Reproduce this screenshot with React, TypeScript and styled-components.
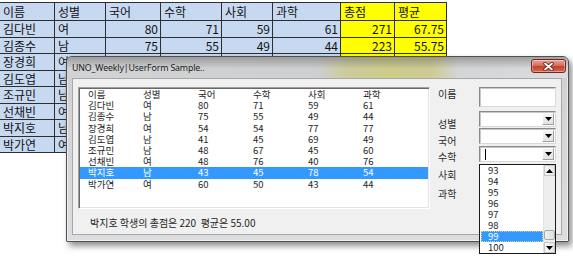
import React from "react";
import styled, { createGlobalStyle } from "styled-components";

const Global = createGlobalStyle`
  html, body { margin: 0; padding: 0; background: #ffffff; }
  body { font-family: "Noto Sans CJK KR", "Noto Sans", sans-serif; }
  * { box-sizing: border-box; }
`;

const Page = styled.div`
  position: relative;
  width: 573px;
  height: 260px;
  overflow: hidden;
  padding-top: 2px;
`;

const Sheet = styled.div`
  display: grid;
  grid-template-columns: 55px 51px 55px 61px 51px 68px 54px 52px;
  grid-template-rows: 18px 17px 16px 17px 16px 17px 16px 17px 16px;
  width: max-content;
  border-top: 1px solid #2e2e2e;
`;

const Cell = styled.div<{ $tone: "blue" | "yellow"; $align: "left" | "right" }>`
  display: flex;
  align-items: center;
  justify-content: ${(p) => (p.$align === "right" ? "flex-end" : "flex-start")};
  padding: 0 ${(p) => (p.$align === "right" ? "2px" : "3px")};
  background: ${(p) => (p.$tone === "yellow" ? "#ffff00" : "#c6d9f1")};
  border-right: 1px solid #2e2e2e;
  border-bottom: 1px solid #2e2e2e;
  font-size: 12px;
  line-height: 14px;
  color: #111;
  white-space: nowrap;
`;

const Window = styled.div`
  position: absolute;
  left: 66px;
  top: 56px;
  width: 503px;
  height: 186px;
  display: flex;
  flex-direction: column;
  border: 1px solid #505050;
  border-radius: 6px 6px 1px 1px;
  background: linear-gradient(to bottom, #cfd0d2 0%, #dcdddf 100%);
  box-shadow: 3px 4px 6px rgba(0, 0, 0, 0.45), inset 0 0 0 1px rgba(255, 255, 255, 0.55);
`;

const TitleBar = styled.div`
  height: 21px;
  flex: none;
  display: flex;
  align-items: flex-start;
  justify-content: space-between;
  padding-left: 5px;
  border-radius: 5px 5px 0 0;
  background:
    linear-gradient(to bottom, rgba(100, 100, 100, 0.5) 0%, rgba(190, 190, 190, 0.1) 55%, rgba(220, 220, 220, 0) 100%),
    linear-gradient(to right, #d3d4d5 0%, #cfd0d1 50%, #cdcc98 56%, #cfcd86 64%, #cdcc92 73%, #d5d6d7 78%, #dcdddf 100%);
`;

const Title = styled.div`
  margin-top: 5px;
  font-family: "Noto Sans", "Noto Sans CJK KR", sans-serif;
  font-size: 8.8px;
  line-height: 12px;
  color: #1b1b1b;
  letter-spacing: -0.15px;
`;

const CloseButton = styled.div`
  margin-top: 2px;
  margin-right: 2px;
  width: 35px;
  height: 14px;
  display: flex;
  align-items: center;
  justify-content: center;
  border: 1px solid #6e2a22;
  border-radius: 3px;
  background: linear-gradient(to bottom, #e8a598 0%, #d6705f 45%, #c2412c 55%, #d76a52 100%);
  box-shadow: inset 0 0 0 1px rgba(255, 255, 255, 0.35);
`;

const Client = styled.div`
  flex: 1;
  margin: 0 6px 6px 5px;
  display: flex;
  flex-direction: column;
  background: #f0f0f0;
  border: 1px solid #a6a8ab;
  padding: 8px 0 0 5px;
`;

const Body = styled.div`
  display: flex;
  gap: 8px;
`;

const ListBox = styled.div`
  width: 352px;
  height: 122px;
  flex: none;
  background: #ffffff;
  border: 1px solid;
  border-color: #a0a0a0 #ffffff #ffffff #a0a0a0;
  box-shadow: inset 1px 1px 0 #696969, inset -1px -1px 0 #e3e3e3;
  padding: 1px 1px 0 1px;
`;

const ListRow = styled.div<{ $selected: boolean }>`
  display: grid;
  grid-template-columns: repeat(6, 55px);
  padding-left: 8px;
  height: 11.2px;
  background: ${(p) => (p.$selected ? "#3399ff" : "transparent")};
  color: ${(p) => (p.$selected ? "#ffffff" : "#1e1e1e")};
`;

const ListCell = styled.div`
  font-size: 9.5px;
  line-height: 11.2px;
  white-space: nowrap;
`;

const SidePanel = styled.div`
  display: flex;
`;

const Labels = styled.div`
  width: 41px;
  display: flex;
  flex-direction: column;
`;

const FieldLabel = styled.div<{ $offset: number }>`
  margin-top: ${(p) => p.$offset}px;
  height: 12px;
  font-size: 10px;
  line-height: 12px;
  color: #2a2a2a;
  white-space: nowrap;
`;

const Controls = styled.div`
  position: relative;
  width: 77px;
  display: flex;
  flex-direction: column;
`;

const TextBox = styled.div`
  height: 20px;
  background: #ffffff;
  border: 1px solid;
  border-color: #8a8a8a #d8d8d8 #d8d8d8 #8a8a8a;
  box-shadow: inset 1px 1px 0 #c8c8c8;
`;

const Combo = styled.div<{ $gap: number }>`
  margin-top: ${(p) => p.$gap}px;
  height: 16px;
  display: flex;
  align-items: stretch;
  background: #ffffff;
  border: 1px solid;
  border-color: #8a8a8a #d8d8d8 #d8d8d8 #8a8a8a;
  box-shadow: inset 1px 1px 0 #c8c8c8;
`;

const ComboText = styled.div`
  flex: 1;
  display: flex;
  align-items: center;
  padding-left: 5px;
`;

const Caret = styled.div`
  width: 1px;
  height: 11px;
  background: #000;
`;

const DropButton = styled.div`
  width: 12px;
  margin: 1px;
  display: flex;
  align-items: center;
  justify-content: center;
  background: linear-gradient(to bottom, #f4f4f4, #e2e2e2);
  border: 1px solid;
  border-color: #ffffff #a0a0a0 #a0a0a0 #ffffff;
`;

const DropList = styled.div`
  position: absolute;
  left: 0;
  top: 77px;
  width: 77px;
  display: flex;
  background: #ffffff;
  border: 1px solid #1a1a1a;
`;

const DropItems = styled.div`
  flex: 1;
  padding: 0 0 0 1px;
`;

const DropItem = styled.div<{ $selected: boolean }>`
  height: 11px;
  font-size: 9.5px;
  line-height: 11px;
  padding-left: 7px;
  color: ${(p) => (p.$selected ? "#ffffff" : "#1e1e1e")};
  background: ${(p) => (p.$selected ? "#3399ff" : "transparent")};
  outline: ${(p) => (p.$selected ? "1px dotted #c9d3a0" : "none")};
  outline-offset: -1px;
`;

const ScrollBar = styled.div`
  width: 12px;
  display: flex;
  flex-direction: column;
  background: #eeeeee;
  border-left: 1px solid #e2e2e2;
`;

const ScrollButton = styled.div`
  height: 11px;
  display: flex;
  align-items: center;
  justify-content: center;
  background: linear-gradient(to right, #f6f6f6, #e6e6e6);
  border: 1px solid #c8c8c8;
`;

const Track = styled.div`
  flex: 1;
  display: flex;
  flex-direction: column;
  justify-content: flex-end;
  padding-bottom: 2px;
`;

const Thumb = styled.div`
  height: 10px;
  background: linear-gradient(to right, #f2f2f2, #dcdcdc);
  border: 1px solid #a8a8a8;
  border-radius: 2px;
`;

const Footer = styled.div`
  margin-top: 8px;
  padding-left: 12px;
  font-size: 10px;
  line-height: 12px;
  color: #1e1e1e;
  white-space: pre;
`;

const Down = () => (
  <svg width="7" height="4" viewBox="0 0 7 4">
    <path d="M0 0 H7 L3.5 4 Z" fill="#000" />
  </svg>
);

const Up = () => (
  <svg width="7" height="4" viewBox="0 0 7 4">
    <path d="M0 4 H7 L3.5 0 Z" fill="#000" />
  </svg>
);

const header = ["이름", "성별", "국어", "수학", "사회", "과학", "총점", "평균"];
const rows: (string | number)[][] = [
  ["김다빈", "여", 80, 71, 59, 61, 271, "67.75"],
  ["김종수", "남", 75, 55, 49, 44, 223, "55.75"],
  ["장경희", "여", 54, 54, 77, 77, 262, "65.5"],
  ["김도엽", "남", 41, 45, 69, 49, 204, "51"],
  ["조규민", "남", 48, 67, 45, 60, 220, "55"],
  ["선채빈", "여", 48, 76, 40, 76, 240, "60"],
  ["박지호", "남", 43, 45, 78, 54, 220, "55"],
  ["박가연", "여", 60, 50, 43, 44, 197, "49.25"],
];

const labels = [
  { text: "이름", off: 1 },
  { text: "성별", off: 18 },
  { text: "국어", off: 5 },
  { text: "수학", off: 4 },
  { text: "사회", off: 6 },
  { text: "과학", off: 7 },
];

const dropValues = [93, 94, 95, 96, 97, 98, 99, 100];

export default function App() {
  const listRows = [header.slice(0, 6), ...rows.map((r) => r.slice(0, 6))];
  return (
    <Page>
      <Global />
      <Sheet>
        {header.map((h, i) => (
          <Cell key={"h" + i} $tone={i >= 6 ? "yellow" : "blue"} $align="left">
            {h}
          </Cell>
        ))}
        {rows.map((r, ri) =>
          r.map((v, ci) => (
            <Cell
              key={ri + "-" + ci}
              $tone={ci >= 6 ? "yellow" : "blue"}
              $align={ci >= 2 ? "right" : "left"}
            >
              {v}
            </Cell>
          ))
        )}
      </Sheet>

      <Window>
        <TitleBar>
          <Title>UNO_Weekly|UserForm Sample..</Title>
          <CloseButton>
            <svg width="11" height="9" viewBox="0 0 11 9">
              <path d="M2 1.5 L9 7.5 M9 1.5 L2 7.5" stroke="#5a1a12" strokeWidth="3.4" strokeLinecap="round" />
              <path d="M2 1.5 L9 7.5 M9 1.5 L2 7.5" stroke="#ffffff" strokeWidth="1.8" strokeLinecap="round" />
            </svg>
          </CloseButton>
        </TitleBar>
        <Client>
          <Body>
            <ListBox>
              {listRows.map((r, i) => (
                <ListRow key={i} $selected={i === 7}>
                  {r.map((c, j) => (
                    <ListCell key={j}>{c}</ListCell>
                  ))}
                </ListRow>
              ))}
            </ListBox>
            <SidePanel>
              <Labels>
                {labels.map((l) => (
                  <FieldLabel key={l.text} $offset={l.off}>
                    {l.text}
                  </FieldLabel>
                ))}
              </Labels>
              <Controls>
                <TextBox />
                <Combo $gap={4}>
                  <ComboText />
                  <DropButton>
                    <Down />
                  </DropButton>
                </Combo>
                <Combo $gap={1}>
                  <ComboText />
                  <DropButton>
                    <Down />
                  </DropButton>
                </Combo>
                <Combo $gap={2}>
                  <ComboText>
                    <Caret />
                  </ComboText>
                  <DropButton>
                    <Down />
                  </DropButton>
                </Combo>
                <DropList>
                  <DropItems>
                    {dropValues.map((v) => (
                      <DropItem key={v} $selected={v === 99}>
                        {v}
                      </DropItem>
                    ))}
                  </DropItems>
                  <ScrollBar>
                    <ScrollButton>
                      <Up />
                    </ScrollButton>
                    <Track>
                      <Thumb />
                    </Track>
                    <ScrollButton>
                      <Down />
                    </ScrollButton>
                  </ScrollBar>
                </DropList>
              </Controls>
            </SidePanel>
          </Body>
          <Footer>{"박지호 학생의 총점은 220  평균은 55.00"}</Footer>
        </Client>
      </Window>
    </Page>
  );
}
